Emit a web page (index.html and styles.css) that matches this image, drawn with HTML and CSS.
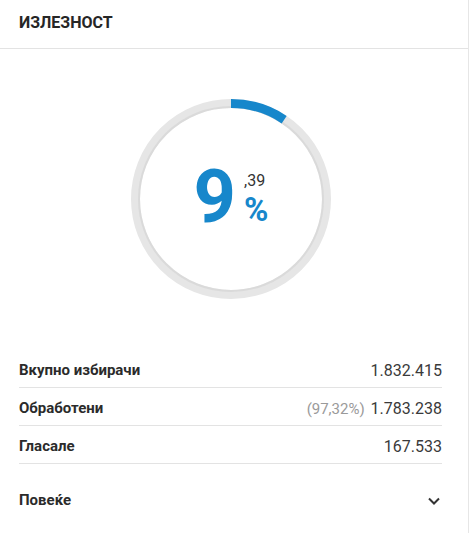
FILE: index.html
```html
<!DOCTYPE html>
<html lang="mk">
<head>
<meta charset="utf-8">
<link rel="stylesheet" href="styles.css">
</head>
<body>
<div class="card">
  <div class="header"><span class="title">ИЗЛЕЗНОСТ</span></div>
  <div class="gauge-wrap">
    <div class="gauge">
      <svg class="ring" width="202" height="202" viewBox="0 0 202 202">
        <circle cx="101" cy="101" r="95.5" fill="none" stroke="#e6e6e6" stroke-width="9"/>
        <circle cx="101" cy="101" r="92" fill="none" stroke="#d2d2d2" stroke-width="2" opacity="0.6"/>
        <circle cx="101" cy="101" r="95.5" fill="none" stroke="#1787cb" stroke-width="9"
          stroke-dasharray="56.3 600" transform="rotate(-90 101 101)"/>
      </svg>
      <div class="value">
        <span class="big">9</span>
        <span class="side">
          <span class="dec">,39</span>
          <span class="pct">%</span>
        </span>
      </div>
    </div>
  </div>
  <div class="rows">
    <div class="row"><span class="label">Вкупно избирачи</span><span class="num">1.832.415</span></div>
    <div class="row"><span class="label">Обработени</span><span class="num"><span class="muted">(97,32%)</span> 1.783.238</span></div>
    <div class="row"><span class="label">Гласале</span><span class="num">167.533</span></div>
  </div>
  <div class="more">
    <span class="label">Повеќе</span>
    <svg class="chev" width="14" height="10" viewBox="0 0 14 10"><path d="M2 2.5 L7 7.5 L12 2.5" fill="none" stroke="#333" stroke-width="2"/></svg>
  </div>
</div>
</body>
</html>
```
FILE: styles.css
```css
html, body {
  margin: 0;
  padding: 0;
  background: #fff;
}
body {
  font-family: Roboto, "Liberation Sans", sans-serif;
  color: #333;
}
.card {
  width: 468px;
  height: 533px;
  border-right: 1px solid #e6e6e6;
  box-sizing: content-box;
}
.header {
  height: 49px;
  border-bottom: 1px solid #e3e3e3;
  padding: 0 19px;
  box-sizing: border-box;
  display: flex;
  align-items: center;
}
.title {
  font-size: 16px;
  font-weight: 700;
  color: #262626;
  position: relative;
  top: -2px;
}
.gauge-wrap {
  display: flex;
  justify-content: center;
  padding: 49px 0 0 0;
  margin-left: -6px;
}
.gauge {
  position: relative;
  width: 202px;
  height: 202px;
}
.ring {
  display: block;
}
.value {
  position: absolute;
  inset: 0;
  display: flex;
  align-items: center;
  justify-content: center;
  color: #1787cb;
}
.big {
  font-size: 74px;
  font-weight: 700;
  line-height: 1;
  margin-right: 8px;
  position: relative;
  top: -2px;
}
.side {
  display: flex;
  flex-direction: column;
  align-items: flex-start;
  margin-top: 1px;
}
.dec {
  font-size: 16px;
  color: #333;
  line-height: 16px;
}
.pct {
  font-size: 33px;
  font-weight: 700;
  line-height: 34px;
  margin-top: 4px;
}
.rows {
  margin-top: 50px;
  padding: 0 26px 0 19px;
}
.row {
  height: 38px;
  padding-top: 3px;
  border-bottom: 1px solid #e3e3e3;
  box-sizing: border-box;
  display: flex;
  align-items: center;
  justify-content: space-between;
}
.label {
  font-size: 15px;
  font-weight: 700;
  color: #2b2b2b;
}
.num {
  font-size: 16px;
  color: #3a3a3a;
}
.muted {
  color: #9a9a9a;
  font-size: 15px;
  margin-right: 2px;
}
.more {
  padding: 0 25px 0 19px;
  margin-top: 16px;
  height: 40px;
  display: flex;
  align-items: center;
  justify-content: space-between;
}
.chev {
  display: block;
  margin-right: 2px;
  position: relative;
  top: 1px;
}
```
